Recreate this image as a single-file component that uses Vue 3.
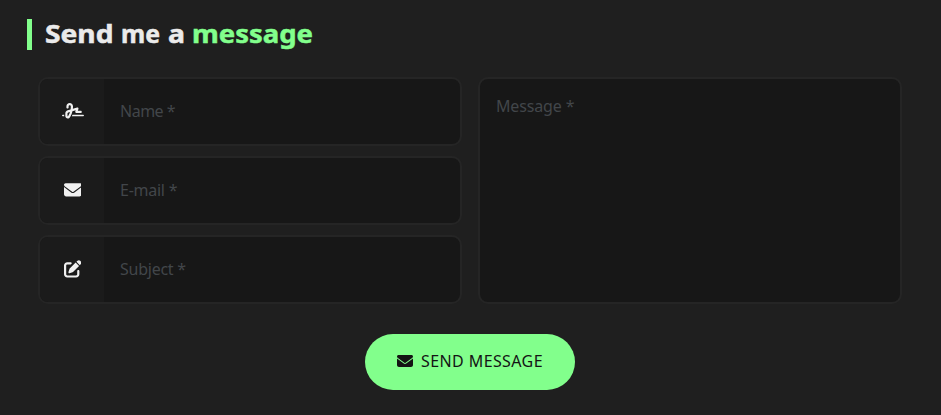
<script setup>
import { reactive } from 'vue'

const fields = [
  {
    key: 'name', label: 'Name *', type: 'text', width: 22, viewBox: '0 0 640 512',
    path: 'M192 128c0-17.7 14.3-32 32-32s32 14.3 32 32v7.8c0 27.7-2.4 55.3-7.1 82.5l-84.4 25.3c-40.6 12.2-68.4 49.6-68.4 92v71.9c0 40 32.5 72.5 72.5 72.5c26 0 50-13.9 62.9-36.5l13.9-24.3c26.8-47 46.5-97.7 58.4-150.5l94.4-28.3-12.5 37.5c-3.3 9.8-1.6 20.5 4.4 28.8s15.7 13.3 26 13.3H544c17.7 0 32-14.3 32-32s-14.3-32-32-32H460.4l18-53.9c3.8-11.3 .9-23.8-7.4-32.4s-20.7-11.8-32.2-8.4L316.4 198.1c2.4-20.7 3.6-41.4 3.6-62.3V128c0-53-43-96-96-96s-96 43-96 96v32c0 17.7 14.3 32 32 32s32-14.3 32-32V128zm-9.2 177l49-14.7c-10.4 33.8-24.5 66.4-42.1 97.2l-13.9 24.3c-1.5 2.6-4.3 4.3-7.4 4.3c-4.7 0-8.5-3.8-8.5-8.5V335.6c0-14.1 9.3-26.6 22.8-30.7zM24 368c-13.3 0-24 10.7-24 24s10.7 24 24 24H64.3c-.2-2.8-.3-5.6-.3-8.5V368H24zm592 48c13.3 0 24-10.7 24-24s-10.7-24-24-24H305.9c-6.7 16.3-14.2 32.3-22.3 48H616z'
  },
  {
    key: 'email', label: 'E-mail *', type: 'email', width: 17.6, viewBox: '0 0 512 512',
    path: 'M48 64C21.5 64 0 85.5 0 112c0 15.1 7.1 29.3 19.2 38.4L236.8 313.6c11.4 8.5 27 8.5 38.4 0L492.8 150.4c12.1-9.1 19.2-23.3 19.2-38.4c0-26.5-21.5-48-48-48H48zM0 176V384c0 35.3 28.7 64 64 64H448c35.3 0 64-28.7 64-64V176L294.4 339.2c-22.8 17.1-54 17.1-76.8 0L0 176z'
  },
  {
    key: 'subject', label: 'Subject *', type: 'text', width: 17.6, viewBox: '0 0 512 512',
    path: 'M471.6 21.7c-21.9-21.9-57.3-21.9-79.2 0L362.3 51.7l97.9 97.9 30.1-30.1c21.9-21.9 21.9-57.3 0-79.2L471.6 21.7zm-299.2 220c-6.1 6.1-10.8 13.6-13.5 21.9l-29.6 88.8c-2.9 8.6-.6 18.1 5.8 24.6s15.9 8.7 24.6 5.8l88.8-29.6c8.2-2.7 15.7-7.4 21.9-13.5L437.7 172.3 339.7 74.3 172.4 241.7zM96 64C43 64 0 107 0 160V416c0 53 43 96 96 96H352c53 0 96-43 96-96V320c0-17.7-14.3-32-32-32s-32 14.3-32 32v96c0 17.7-14.3 32-32 32H96c-17.7 0-32-14.3-32-32V160c0-17.7 14.3-32 32-32h96c17.7 0 32-14.3 32-32s-14.3-32-32-32H96z'
  }
]
const envelope = fields[1].path
const form = reactive({ name: '', email: '', subject: '', message: '' })
</script>

<template>
  <main class="contact">
    <h2 class="title">
      <svg class="title-text" width="270" height="30" viewBox="0 0 270 30">
        <text class="word" x="0" y="24" textLength="68.5" lengthAdjust="spacingAndGlyphs">Send</text>
        <text class="word" x="76" y="24" textLength="39" lengthAdjust="spacingAndGlyphs">me</text>
        <text class="word" x="123" y="24" textLength="17" lengthAdjust="spacingAndGlyphs">a</text>
        <text class="word accent" x="147" y="24" textLength="121" lengthAdjust="spacingAndGlyphs">message</text>
      </svg>
    </h2>
    <form class="form" @submit.prevent>
      <div class="grid">
        <div class="column">
          <label v-for="f in fields" :key="f.key" class="field">
            <span class="icon">
              <svg :width="f.width" height="17.6" :viewBox="f.viewBox"><path :d="f.path" /></svg>
            </span>
            <input v-model="form[f.key]" :class="['input', f.key]" :type="f.type" :placeholder="f.label" />
          </label>
        </div>
        <textarea v-model="form.message" class="message" placeholder="Message *"></textarea>
      </div>
      <button class="send" type="submit">
        <svg width="16" height="16" viewBox="0 0 512 512"><path :d="envelope" /></svg>
        <span>SEND MESSAGE</span>
      </button>
    </form>
  </main>
</template>

<style>
body { background: #1f1f1f; }
</style>

<style scoped>
* { box-sizing: border-box; }
.contact {
  height: 415px;
  padding: 19px 39px 0 27px;
  overflow: hidden;
  background: #1f1f1f;
  font-family: "Noto Sans", sans-serif;
}
.title {
  display: flex;
  height: 30.5px;
  margin: 0;
  padding-left: 13px;
  border-left: 5px solid #82ff8c;
}
.title-text { display: block; overflow: visible; }
.word {
  fill: #ebebeb;
  stroke: #ebebeb;
  stroke-width: 0.5px;
  font: 700 25.5px "Noto Sans", sans-serif;
}
.accent { fill: #82ff8c; stroke: #82ff8c; }
.form {
  display: flex;
  flex-direction: column;
  align-items: center;
  gap: 30px;
  margin: 27.5px 0 0 11px;
}
.grid {
  display: grid;
  grid-template-columns: 1fr 1fr;
  gap: 16px;
  width: 100%;
  height: 227px;
}
.column { display: flex; flex-direction: column; gap: 10px; }
.field {
  display: flex;
  height: 69px;
  overflow: hidden;
  border: 2px solid #252525;
  border-radius: 10px;
  background: #171717;
}
.icon {
  display: flex;
  flex: none;
  align-items: center;
  justify-content: center;
  width: 64px;
  padding: 0 0 1px 1px;
  background: #1b1b1b;
  fill: #f0f0f0;
}
.input {
  flex: 1;
  min-width: 0;
  padding: 0 16px 2px;
  border: 0;
  outline: 0;
  background: transparent;
  color: #ebebeb;
  font: 400 16px "Noto Sans", sans-serif;
  letter-spacing: -0.25px;
}
.input.name { letter-spacing: -0.5px; }
.message {
  display: block;
  width: 100%;
  height: 227px;
  padding: 16px;
  border: 2px solid #252525;
  border-radius: 10px;
  outline: 0;
  resize: none;
  background: #171717;
  color: #ebebeb;
  font: 400 16px/22px "Noto Sans", sans-serif;
  letter-spacing: -0.15px;
}
.input::placeholder, .message::placeholder { color: #42464a; opacity: 1; }
.send {
  display: flex;
  align-items: center;
  justify-content: center;
  gap: 8px;
  width: 210px;
  height: 56px;
  padding: 0 0 2px;
  border: 0;
  border-radius: 28px;
  background: #82ff8c;
  color: #141414;
  fill: #141414;
  font: 400 16px "Noto Sans", sans-serif;
  letter-spacing: 0.4px;
  white-space: nowrap;
}
</style>
